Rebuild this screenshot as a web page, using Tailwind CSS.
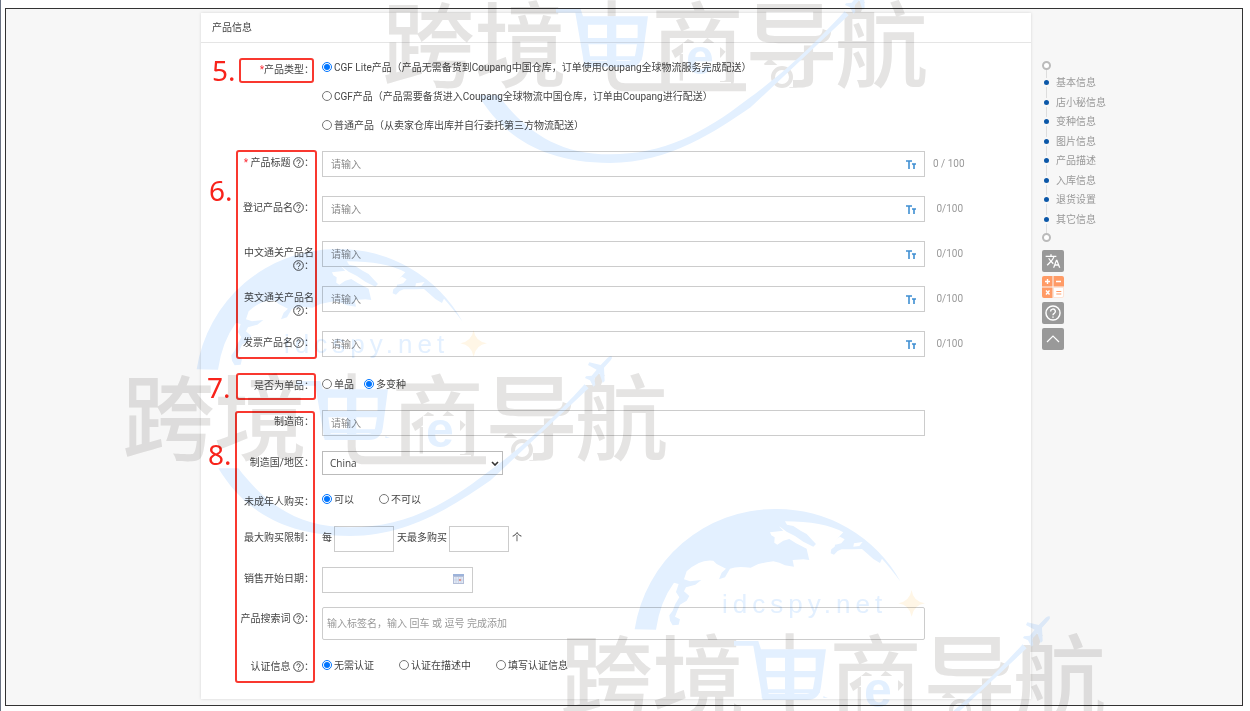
<!DOCTYPE html>
<html lang="zh-CN">
  <head>
    <meta charset="UTF-8">
    <meta name="viewport" content="width=device-width, initial-scale=1.0">
    <title>产品信息</title>
    <script src="https://cdn.jsdelivr.net/npm/@tailwindcss/browser@4"></script>
  </head>
  <body class="relative bg-white overflow-hidden font-[Roboto,'Noto_Sans_CJK_SC',sans-serif] text-[10px] leading-[13px] text-[#444]">
    <!-- Shared symbols -->
    <svg class="absolute size-0" aria-hidden="true">
      <symbol id="help" viewBox="0 0 20 20">
        <circle cx="10" cy="10" r="8.8" fill="none" stroke="currentColor" stroke-width="1.8" />
        <path d="M7 8.2a3 3 0 1 1 4.6 2.4c-1 .6-1.6 1-1.6 2.2M10 14.3v1.6" fill="none" stroke="currentColor" stroke-width="1.8" />
      </symbol>
      <symbol id="case" viewBox="0 0 10 9">
        <path d="M0 1h6M3 1v8M6 4h4M8 4v5" fill="none" stroke="#3f8fd2" stroke-width="1.6" />
      </symbol>
      <clipPath id="cart-area"><path d="M316 380h76v58h-76z" /></clipPath>
      <symbol id="stamp" viewBox="0 0 700 600" overflow="visible">
        <g transform="translate(102 230) scale(.3333)">
          <path fill="#e3f0ff" d="M284 418A425 425 0 0 1 705 57A425 425 0 0 1 1082 275Q1052 235 1026 206L1020 219L1000 207L984 193L966 177L938 178L905 178L893 183L882 194L872 190L874 178L884 170L888 152L900 137L910 127Q850 94 735 94L741 104L760 108L782 122L800 132L828 162L820 170L790 155L765 138L740 125L722 112L698 100L690 95L712 104L730 122L690 127L694 136L704 142L703 158L712 164L730 152L748 147L768 160L780 166L800 176L803 190L808 210L790 208L758 210L762 230L735 226L718 218L700 214L680 217L655 222L632 233Q590 228 570 236L555 262L537 268L545 248L558 236L530 222L520 212Q480 206 440 244L432 268L450 274L484 270L466 284L438 292L432 304L448 318L440 332L420 344L412 362L405 380L420 388L416 404L398 406L390 392L388 376L398 362L406 342L418 322L408 306L416 282L402 278Q360 335 348 419Z" />
          <path fill="#fff" d="M882 152l18 -12l14 8l-10 12l-18 4ZM942 160l26 -4l-10 12l-18 2Z" />
          <path fill="#fff6e6" d="M1115 300q4 34 40 40q-34 5 -40 40q-6 -35 -40 -40q34 -6 40 -40Z" />
        </g>
        <text x="284" y="353" fill="#e3f0ff" font-family="Liberation Sans" font-size="26" letter-spacing="5">idcspy.net</text>
        <g fill="#e5e4e3" font-family="Noto Sans CJK SC" font-weight="500" font-size="93">
          <text x="122 214" y="453">跨境</text>
          <text x="391 485 575" y="453">商导航</text>
        </g>
        <!-- Space for the badge in the third glyph and the ring in the fourth -->
        <path d="M423 416h37v40h-37zM501 438h32v22h-32z" fill="#fff" />
        <path d="M415 455h56v10h-56z" fill="#fff" />
        <circle cx="522" cy="450" r="9" fill="none" stroke="#e5e4e3" stroke-width="4" />
        <g transform="translate(110 373) scale(.3333)" fill="#e3f0ff">
          <path d="M325 286C400 410 520 489 720 489C900 489 1040 392 1142 322L1436 46L1424 34C1300 170 1200 250 1130 300C1000 400 880 463 720 463C560 463 465 390 385 286Z" />
        </g>
        <g transform="translate(570 345) scale(.3333)" fill="#e3f0ff">
          <path d="M125 34q-6 -2 -12 4L92 60L58 52L54 60L80 74L65 92L48 94L45 99L60 106L70 125L76 120L73 101L88 85L98 114L104 108L102 68L122 46q6 -6 3 -12Z" />
        </g>
        <text x="313" y="449" clip-path="url(#cart-area)" fill="#e3f0ff" font-family="Noto Sans CJK SC" font-weight="300" font-size="80">电</text>
        <!-- Shopping cart -->
        <g transform="translate(102 230) scale(.3333)">
          <path d="M749 430V478M749 628V650Q749 691 790 691H1152" fill="none" stroke="#e5e4e3" stroke-width="24" />
          <path fill="#e3f0ff" fill-rule="evenodd" d="M582 453H655L663 478H858L843 590Q838 630 800 630H668L640 467H582ZM668 497L676 543H735V497ZM763 497V543H827L834 497ZM679 562L686 611H735V562ZM763 562V611H800Q817 611 820 592L825 562Z" />
        </g>
        <text x="426" y="447" fill="#e3f0ff" font-family="Liberation Sans" font-weight="700" font-size="50">e</text>
      </symbol>
    </svg>

    <div class="border-l border-gray-500 pt-2 pb-[5px]">
      <div class="ml-1 mr-[7px] flex border border-[#333] bg-[#f7f7f7] pt-1 pb-1.5 pl-[195px]">
        <main class="relative flex-1 bg-white shadow-[0_0_3px_#0002] pb-[22px]">
          <h1 class="h-[30px] border-b border-[#e5e5e5] px-[11px] pt-2">产品信息</h1>

          <form>
            <!-- Product type -->
            <section class="relative mt-2.5 grid grid-cols-[113px_1fr] gap-x-2" role="radiogroup" aria-labelledby="type-label">
              <span class="absolute left-[11px] top-[3px] font-['Noto_Sans'] text-[28px] leading-7 text-[#f8231b]">5.</span>
              <span class="absolute left-[38px] top-[5px] h-[25px] w-[75px] rounded-[3px] border-2 border-[#f9382f]"></span>
              <span id="type-label" class="pt-2.5 text-right"><span class="text-red-500">*</span>产品类型：</span>
              <div class="flex flex-col gap-px">
                <label class="flex h-7 items-center gap-0.5"><input type="radio" name="type" checked class="size-2.5 accent-[#0075ff]">CGF Lite产品（产品无需备货到Coupang中国仓库，订单使用Coupang全球物流服务完成配送）</label>
                <label class="flex h-7 items-center gap-0.5"><input type="radio" name="type" class="size-2.5">CGF产品（产品需要备货进入Coupang全球物流中国仓库，订单由Coupang进行配送）</label>
                <label class="flex h-7 items-center gap-0.5"><input type="radio" name="type" class="size-2.5">普通产品（从卖家仓库出库并自行委托第三方物流配送）</label>
              </div>
            </section>

            <!-- Names -->
            <section class="relative mt-3 flex flex-col gap-[19px]">
              <span class="absolute left-2 top-[25px] font-['Noto_Sans'] text-[28px] leading-7 text-[#f8231b]">6.</span>
              <span class="absolute -top-px left-[35px] h-[209px] w-[81px] rounded-[3px] border-2 border-[#f9382f]"></span>
              <div class="grid h-[26px] grid-cols-[113px_1fr_98px] gap-x-2">
                <label for="title" class="ml-auto w-[75px] whitespace-nowrap pt-[5px] text-right"><span class="text-red-500">*</span> 产品标题 <svg class="inline size-[11px] align-[-2px]"><use href="#help" /></svg>：</label>
                <div class="relative">
                  <input id="title" placeholder="请输入" class="h-[26px] w-full border border-[#ccc] px-2 placeholder:text-[#888]">
                  <svg class="absolute right-[9px] top-[9px] h-[9px] w-2.5"><use href="#case" /></svg>
                </div>
                <span class="whitespace-nowrap pt-1.5 text-[#999]">0 / 100</span>
              </div>
              <div class="grid h-[26px] grid-cols-[113px_1fr_98px] gap-x-2">
                <label for="reg" class="ml-auto w-[75px] pt-[5px] text-right">登记产品名<svg class="inline size-[11px] align-[-2px]"><use href="#help" /></svg>：</label>
                <div class="relative">
                  <input id="reg" placeholder="请输入" class="h-[26px] w-full border border-[#ccc] px-2 placeholder:text-[#888]">
                  <svg class="absolute right-[9px] top-[9px] h-[9px] w-2.5"><use href="#case" /></svg>
                </div>
                <span class="w-[30px] pt-1.5 text-right text-[#999]">0/100</span>
              </div>
              <div class="grid h-[26px] grid-cols-[113px_1fr_98px] gap-x-2">
                <label for="cn" class="ml-auto w-[75px] pt-[5px] text-right">中文通关产品名<svg class="inline size-[11px] align-[-2px]"><use href="#help" /></svg>：</label>
                <div class="relative">
                  <input id="cn" placeholder="请输入" class="h-[26px] w-full border border-[#ccc] px-2 placeholder:text-[#888]">
                  <svg class="absolute right-[9px] top-[9px] h-[9px] w-2.5"><use href="#case" /></svg>
                </div>
                <span class="w-[30px] pt-1.5 text-right text-[#999]">0/100</span>
              </div>
              <div class="grid h-[26px] grid-cols-[113px_1fr_98px] gap-x-2">
                <label for="en" class="ml-auto w-[75px] pt-[5px] text-right">英文通关产品名<svg class="inline size-[11px] align-[-2px]"><use href="#help" /></svg>：</label>
                <div class="relative">
                  <input id="en" placeholder="请输入" class="h-[26px] w-full border border-[#ccc] px-2 placeholder:text-[#888]">
                  <svg class="absolute right-[9px] top-[9px] h-[9px] w-2.5"><use href="#case" /></svg>
                </div>
                <span class="w-[30px] pt-1.5 text-right text-[#999]">0/100</span>
              </div>
              <div class="grid h-[26px] grid-cols-[113px_1fr_98px] gap-x-2">
                <label for="invoice" class="ml-auto w-[75px] pt-[5px] text-right">发票产品名<svg class="inline size-[11px] align-[-2px]"><use href="#help" /></svg>：</label>
                <div class="relative">
                  <input id="invoice" placeholder="请输入" class="h-[26px] w-full border border-[#ccc] px-2 placeholder:text-[#888]">
                  <svg class="absolute right-[9px] top-[9px] h-[9px] w-2.5"><use href="#case" /></svg>
                </div>
                <span class="w-[30px] pt-1.5 text-right text-[#999]">0/100</span>
              </div>
            </section>

            <!-- Single item or variants -->
            <section class="relative mt-4 grid grid-cols-[113px_1fr] gap-x-2" role="radiogroup" aria-labelledby="single-label">
              <span class="absolute left-1.5 top-0 font-['Noto_Sans'] text-[28px] leading-7 text-[#f8231b]">7.</span>
              <span class="absolute left-[35px] top-0 h-[27px] w-20 rounded-[3px] border-2 border-[#f9382f]"></span>
              <span id="single-label" class="pt-1.5 text-right">是否为单品：</span>
              <div class="flex h-[22px] items-center gap-2.5">
                <label class="flex items-center gap-0.5"><input type="radio" name="single" class="size-2.5">单品</label>
                <label class="flex items-center gap-0.5"><input type="radio" name="single" checked class="size-2.5 accent-[#0075ff]">多变种</label>
              </div>
            </section>

            <!-- Other attributes -->
            <section class="relative mt-[15px]">
              <span class="absolute left-[7px] top-[30px] font-['Noto_Sans'] text-[28px] leading-7 text-[#f8231b]">8.</span>
              <span class="absolute left-[34px] top-px h-[272px] w-20 rounded-[3px] border-2 border-[#f9382f]"></span>
              <div class="grid grid-cols-[113px_1fr_98px] gap-x-2">
                <label for="maker" class="pt-[5px] text-right">制造商：</label>
                <input id="maker" placeholder="请输入" class="h-[26px] border border-[#ccc] px-2 placeholder:text-[#888]">
              </div>
              <div class="mt-[15px] grid grid-cols-[113px_1fr] gap-x-2">
                <label for="country" class="pt-[5px] text-right">制造国/地区：</label>
                <div class="relative w-[181px]">
                  <select id="country" class="h-6 w-full appearance-none border border-[#bbb] px-[7px] font-['Open_Sans']"><option>China</option></select>
                  <svg class="pointer-events-none absolute right-1 top-[10px] h-[5px] w-2" viewBox="0 0 8 5"><path d="M1 1l3 3 3-3" fill="none" stroke="#333" stroke-width="1.6" /></svg>
                </div>
              </div>
              <div class="mt-3 grid grid-cols-[113px_1fr] gap-x-2" role="radiogroup" aria-labelledby="minor-label">
                <span id="minor-label" class="pt-2 text-right">未成年人购买：</span>
                <div class="flex h-6 items-center gap-[25px]">
                  <label class="flex items-center gap-0.5"><input type="radio" name="minor" checked class="size-2.5 accent-[#0075ff]">可以</label>
                  <label class="flex items-center gap-0.5"><input type="radio" name="minor" class="size-2.5">不可以</label>
                </div>
              </div>
              <div class="mt-[15px] grid grid-cols-[113px_1fr] gap-x-2">
                <span class="pt-[5px] text-right">最大购买限制：</span>
                <div class="flex items-start">
                  <label for="days" class="w-3 pt-[5px]">每</label>
                  <input id="days" class="h-[26px] w-[60px] border border-[#ccc] px-1">
                  <label for="max" class="w-[55px] pl-[3px] pt-[5px]">天最多购买</label>
                  <input id="max" class="h-[26px] w-[60px] border border-[#ccc] px-1">
                  <span class="pl-[3px] pt-[5px]">个</span>
                </div>
              </div>
              <div class="mt-[15px] grid grid-cols-[113px_1fr] gap-x-2">
                <label for="start" class="pt-[5px] text-right">销售开始日期：</label>
                <div class="relative w-[151px]">
                  <input id="start" class="h-[26px] w-full border border-[#ccc] px-2">
                  <svg class="absolute right-[9px] top-[7px] h-2.5 w-[11px]" viewBox="0 0 11 10">
                    <path d="M0 0h11v10H0z" fill="#b4bfd8" />
                    <path d="M0 0h11v2H0z" fill="#9db3da" />
                    <path d="M1 3h9v6H1z" fill="#e3e9f5" />
                    <path d="M3 3v6M5.500 3v6M8 3v6M1 6h9" stroke="#b3c0da" stroke-width=".5" />
                    <path d="M6 5h2v2H6z" fill="#e2958c" />
                  </svg>
                </div>
              </div>
              <div class="mt-3.5 grid grid-cols-[113px_1fr_98px] gap-x-2">
                <label for="tags" class="pt-[5px] text-right">产品搜索词 <svg class="inline size-[11px] align-[-2px]"><use href="#help" /></svg>：</label>
                <input id="tags" placeholder="输入标签名，输入 回车 或 逗号 完成添加" class="h-[33px] rounded-xs border border-[#ccc] px-1 placeholder:text-[#999]">
              </div>
              <div class="mt-[13px] grid grid-cols-[113px_1fr] gap-x-2" role="radiogroup" aria-labelledby="cert-label">
                <span id="cert-label" class="pt-[7px] text-right">认证信息 <svg class="inline size-[11px] align-[-2px]"><use href="#help" /></svg>：</span>
                <div class="flex h-6 items-center gap-[25px]">
                  <label class="flex items-center gap-0.5"><input type="radio" name="cert" checked class="size-2.5 accent-[#0075ff]">无需认证</label>
                  <label class="flex items-center gap-0.5"><input type="radio" name="cert" class="size-2.5">认证在描述中</label>
                  <label class="flex items-center gap-0.5"><input type="radio" name="cert" class="size-2.5">填写认证信息</label>
                </div>
              </div>
            </section>
          </form>
        </main>

        <!-- Section links -->
        <aside class="w-[211px] pl-[11px] pt-12 text-[#999]">
          <nav class="relative">
            <span class="absolute bottom-2 left-1 top-2 w-px bg-[#ddd]"></span>
            <span class="relative block size-[9px] rounded-full border-2 border-[#bbb] bg-white"></span>
            <div class="relative mt-[3px] flex h-[156px] flex-col">
              <a href="#" class="flex flex-1 items-center gap-[5px]"><span class="size-[9px] rounded-full border-2 border-[#f7f7f7] bg-[#0b57a8]"></span>基本信息</a>
              <a href="#" class="flex flex-1 items-center gap-[5px]"><span class="size-[9px] rounded-full border-2 border-[#f7f7f7] bg-[#0b57a8]"></span>店小秘信息</a>
              <a href="#" class="flex flex-1 items-center gap-[5px]"><span class="size-[9px] rounded-full border-2 border-[#f7f7f7] bg-[#0b57a8]"></span>变种信息</a>
              <a href="#" class="flex flex-1 items-center gap-[5px]"><span class="size-[9px] rounded-full border-2 border-[#f7f7f7] bg-[#0b57a8]"></span>图片信息</a>
              <a href="#" class="flex flex-1 items-center gap-[5px]"><span class="size-[9px] rounded-full border-2 border-[#f7f7f7] bg-[#0b57a8]"></span>产品描述</a>
              <a href="#" class="flex flex-1 items-center gap-[5px]"><span class="size-[9px] rounded-full border-2 border-[#f7f7f7] bg-[#0b57a8]"></span>入库信息</a>
              <a href="#" class="flex flex-1 items-center gap-[5px]"><span class="size-[9px] rounded-full border-2 border-[#f7f7f7] bg-[#0b57a8]"></span>退货设置</a>
              <a href="#" class="flex flex-1 items-center gap-[5px]"><span class="size-[9px] rounded-full border-2 border-[#f7f7f7] bg-[#0b57a8]"></span>其它信息</a>
            </div>
            <span class="relative mt-1 block size-[9px] rounded-full border-2 border-[#bbb] bg-white"></span>
          </nav>
          <div class="mt-2 flex flex-col gap-1 text-white">
            <button type="button" aria-label="翻译" class="size-[22px] rounded-xs bg-[#999] p-[3px]">
              <svg viewBox="0 0 24 24" fill="currentColor"><path d="M12.870 15.070l-2.540-2.510.03-.03A17.520 17.520 0 0 0 14.070 6H17V4h-7V2H8v2H1v2h11.170C11.500 7.920 10.440 9.750 9 11.350 8.070 10.320 7.300 9.190 6.690 8h-2c.73 1.630 1.730 3.170 2.980 4.560l-5.090 5.020L4 19l5-5 3.110 3.110.76-2.040zM18.500 10h-2L12 22h2l1.120-3h4.750L21 22h2l-4.500-12zm-2.620 7l1.620-4.330L19.120 17h-3.240z" /></svg>
            </button>
            <button type="button" aria-label="计算器" class="size-[22px]">
              <svg viewBox="0 0 22 22">
                <path d="M2 0h8.500v10.500H0V2q0-2 2-2zM11.500 0H20q2 0 2 2v8.500H11.500zM0 11.500h10.500V22H2q-2 0-2-2z" fill="#ff9b66" />
                <path d="M11.500 11.500h10V20q0 1.500-1.500 1.500h-8.500z" fill="#fff" stroke="#ffd5bd" stroke-width=".6" />
                <path d="M3 5.500h5M5.500 3v5M14 5.500h5M4 14.500l3.500 4M7.500 14.500l-3.500 4" stroke="#fff" stroke-width="1.400" />
                <path d="M14.300 15.500h5M14.300 18h5" stroke="#ff9b66" stroke-width="1.200" />
              </svg>
            </button>
            <button type="button" aria-label="帮助" class="size-[22px] rounded-xs bg-[#999] p-[3px]"><svg class="size-4"><use href="#help" /></svg></button>
            <button type="button" aria-label="回到顶部" class="size-[22px] rounded-xs bg-[#999]">
              <svg viewBox="0 0 22 22"><path d="M5 14l6-6 6 6" fill="none" stroke="currentColor" stroke-width="1.200" /></svg>
            </button>
          </div>
        </aside>
      </div>
    </div>

    <!-- Watermark -->
    <svg class="pointer-events-none absolute inset-0 size-full mix-blend-multiply" aria-hidden="true">
      <use href="#stamp" x="260" y="-373" width="700" height="600" />
      <use href="#stamp" width="700" height="600" />
      <use href="#stamp" x="438" y="260" width="700" height="600" />
    </svg>
  </body>
</html>
